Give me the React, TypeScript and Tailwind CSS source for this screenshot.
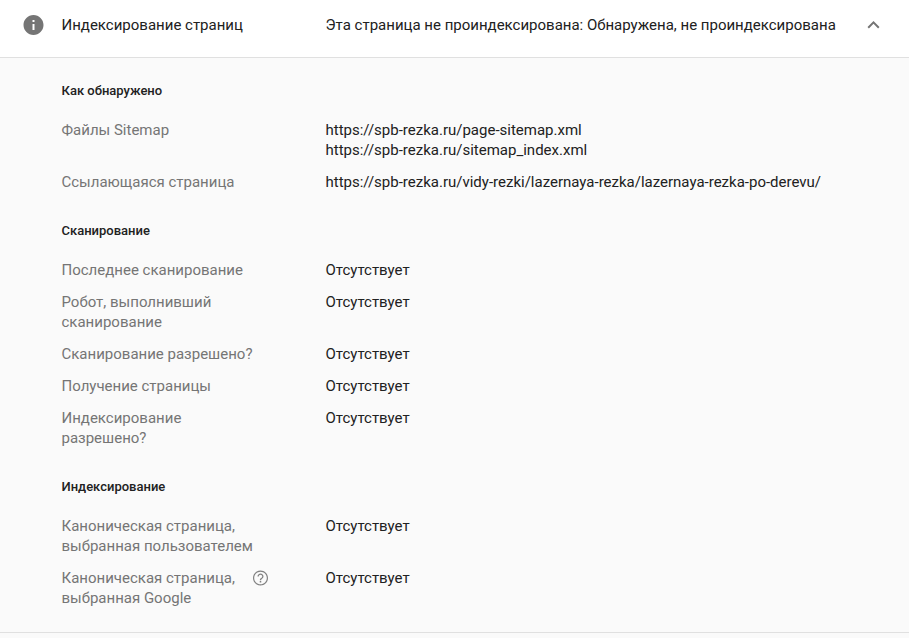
import type { ReactNode } from 'react';

type Row = { label: string; value: string[]; help?: boolean };
type Group = { title: string; rows: Row[] };

const none = ['Отсутствует'];

const groups: Group[] = [
  {
    title: 'Как обнаружено',
    rows: [
      {
        label: 'Файлы Sitemap',
        value: ['https://spb-rezka.ru/page-sitemap.xml', 'https://spb-rezka.ru/sitemap_index.xml'],
      },
      {
        label: 'Ссылающаяся страница',
        value: ['https://spb-rezka.ru/vidy-rezki/lazernaya-rezka/lazernaya-rezka-po-derevu/'],
      },
    ],
  },
  {
    title: 'Сканирование',
    rows: [
      { label: 'Последнее сканирование', value: none },
      { label: 'Робот, выполнивший сканирование', value: none },
      { label: 'Сканирование разрешено?', value: none },
      { label: 'Получение страницы', value: none },
      { label: 'Индексирование разрешено?', value: none },
    ],
  },
  {
    title: 'Индексирование',
    rows: [
      { label: 'Каноническая страница, выбранная пользователем', value: none },
      { label: 'Каноническая страница, выбранная Google', value: none, help: true },
    ],
  },
];

function Icon({
  className,
  viewBox = '0.5 0 24 24',
  children,
}: {
  className: string;
  viewBox?: string;
  children: ReactNode;
}) {
  return (
    <svg viewBox={viewBox} fill="currentColor" className={className}>
      {children}
    </svg>
  );
}

function DetailRow({ label, value, help }: Row) {
  return (
    <div className="flex py-1.5">
      <dt className="flex w-[264px] shrink-0 text-[#757575]">
        <span className="w-[192px]">{label}</span>
        {help && (
          <Icon viewBox="-0.67 0 24 24" className="mt-px -ml-[2.5px] h-[18px] w-[18px] text-[#808080]">
            <path d="M11 18h2v-2h-2v2zm1-16C6.48 2 2 6.48 2 12s4.48 10 10 10 10-4.48 10-10S17.52 2 12 2zm0 18.4c-4.63 0-8.4-3.77-8.4-8.4s3.77-8.4 8.4-8.4 8.4 3.77 8.4 8.4-3.77 8.4-8.4 8.4zm0-14.4c-2.21 0-4 1.79-4 4h1.7c0-1.27 1.03-2.3 2.3-2.3s2.3 1.03 2.3 2.3c0 2-3.15 1.75-3.15 5h1.7c0-2.25 3.15-2.5 3.15-5 0-2.21-1.79-4-4-4z" />
          </Icon>
        )}
      </dt>
      <dd className="text-[#212121]">
        {value.map((line) => (
          <div key={line}>{line}</div>
        ))}
      </dd>
    </div>
  );
}

export default function App() {
  return (
    <main className="h-[638px] overflow-hidden bg-[#fafafa] font-[Roboto,sans-serif] text-[15px] leading-5 text-[#212121]">
      <header className="flex h-[58px] border-b border-[#e0e0e0] bg-white pt-[13px] pl-[21.5px]">
        <Icon className="h-6 w-6 shrink-0 text-[#757575]">
          <path d="M12 2C6.48 2 2 6.48 2 12s4.48 10 10 10 10-4.48 10-10S17.52 2 12 2zm1 15h-2v-6h2v6zm0-8h-2V7h2v2z" />
        </Icon>
        <h1 className="ml-4 w-[264px] shrink-0 pt-0.5">Индексирование страниц</h1>
        <p className="w-[536px] shrink-0 whitespace-nowrap pt-0.5">
          Эта страница не проиндексирована: Обнаружена, не проиндексирована
        </p>
        <Icon className="h-6 w-6 shrink-0 text-[#757575]">
          <path d="M12 8l-6 6 1.41 1.41L12 10.83l4.59 4.58L18 14z" />
        </Icon>
      </header>
      <div className="h-[575px] border-b border-[#e0e0e0] pt-6 pl-[61.5px]">
        {groups.map((group) => (
          <section key={group.title} className="mb-6">
            <h2 className="mb-3.5 text-[13px] leading-[18px] font-medium">{group.title}</h2>
            <dl>
              {group.rows.map((row) => (
                <DetailRow key={row.label} {...row} />
              ))}
            </dl>
          </section>
        ))}
      </div>
    </main>
  );
}
